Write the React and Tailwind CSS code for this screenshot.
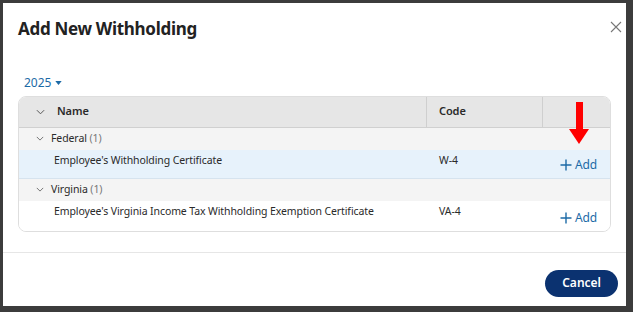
import React from 'react';

const Chevron = ({ className = '' }) => (
  <svg viewBox="0 0 10 6" className={className} fill="none" stroke="currentColor" strokeWidth="1.1">
    <path d="M1 1l4 4 4-4" />
  </svg>
);

const AddButton = () => (
  <button className="flex items-center gap-[3px] text-[12px] text-[#1c6aa6]">
    <svg viewBox="0 0 12 12" className="w-[12px] h-[12px]" fill="none" stroke="currentColor" strokeWidth="1.4">
      <path d="M6 0.5v11M0.5 6h11" />
    </svg>
    Add
  </button>
);

const rows = [
  { group: 'Federal', count: 1, name: "Employee's Withholding Certificate", code: 'W-4', highlight: true },
  { group: 'Virginia', count: 1, name: "Employee's Virginia Income Tax Withholding Exemption Certificate", code: 'VA-4' },
];

export default function App() {
  return (
    <div className="w-[633px] h-[312px] bg-[#3c3c3c] pt-[3px] pl-[3px] font-['Noto_Sans',sans-serif]">
      <div className="w-[623px] h-[303px] bg-white flex flex-col">
        {/* Header */}
        <div className="flex items-start justify-between pl-[15px] pr-[4px] pt-[13px]">
          <h2 className="text-[17px] font-bold text-[#222] tracking-[-0.3px]">Add New Withholding</h2>
          <button className="text-[#777] mt-[5px]">
            <svg viewBox="0 0 12 12" className="w-[12px] h-[12px]" fill="none" stroke="currentColor" strokeWidth="1.1">
              <path d="M1 1l10 10M11 1L1 11" />
            </svg>
          </button>
        </div>

        {/* Year */}
        <div className="pl-[21px] mt-[32px] flex items-center gap-[4px] text-[12px] text-[#1c6aa6]">
          2025
          <svg viewBox="0 0 8 5" className="w-[7px] h-[4px]" fill="currentColor">
            <path d="M0 0h8L4 5z" />
          </svg>
        </div>

        {/* Table */}
        <div className="mx-[15px] mt-[4px] border border-[#dedede] rounded-[8px] overflow-hidden text-[10.5px] tracking-[-0.1px] text-[#2a2a2a]">
          <div className="grid grid-cols-[408px_116px_1fr] h-[31px] bg-[#e6e6e6] border-b border-[#d0d0d0] font-semibold text-[11px]">
            <div className="flex items-center pl-[17px] gap-[12px] border-r border-[#cfcfcf]">
              <Chevron className="w-[9px] h-[6px] text-[#555]" />
              Name
            </div>
            <div className="flex items-center pl-[12px] border-r border-[#cfcfcf]">Code</div>
            <div className="relative">
              <div className="absolute left-[26px] top-[5px] flex flex-col items-center">
                <div className="w-[7px] h-[27px] bg-[#ff0000]" />
                <div className="w-0 h-0 border-l-[10px] border-r-[10px] border-t-[15px] border-l-transparent border-r-transparent border-t-[#ff0000]" />
              </div>
            </div>
          </div>
          {rows.map((r) => (
            <div key={r.group}>
              <div className="h-[22px] bg-[#f4f4f4] flex items-center pl-[17px] gap-[7px]">
                <Chevron className="w-[8px] h-[5px] text-[#666]" />
                <span>
                  {r.group} <span className="text-[#777]">({r.count})</span>
                </span>
              </div>
              <div
                className={`grid grid-cols-[408px_116px_1fr] ${r.highlight ? 'h-[29px] bg-[#e7f2fb] border-b border-[#d6e3ee]' : 'h-[30px] bg-white'}`}
              >
                <div className="pl-[35px] pt-[3px]">{r.name}</div>
                <div className="pl-[12px] pt-[3px]">{r.code}</div>
                <div className={`flex justify-center pl-[4px] ${r.highlight ? 'pt-[3px]' : 'pt-[5px]'}`}>
                  <AddButton />
                </div>
              </div>
            </div>
          ))}
        </div>

        {/* Footer */}
        <div className="mt-[20px] border-t border-[#e6e6e6] flex justify-end pr-[8px] pt-[17px]">
          <button className="h-[27px] px-[17px] rounded-full bg-[#0b3270] text-white text-[12px] font-semibold">
            Cancel
          </button>
        </div>
      </div>
    </div>
  );
}
